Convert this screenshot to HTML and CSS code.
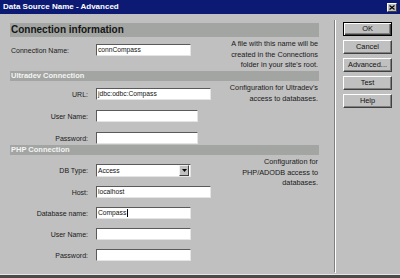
FILE: index.html
```html
<!DOCTYPE html>
<html>
<head>
<meta charset="utf-8">
<link rel="stylesheet" href="styles.css">
</head>
<body>
<div class="window">
  <div class="titlebar">
    <span class="title">Data Source Name - Advanced</span>
    <span class="close"><svg width="6" height="5" viewBox="0 0 6 5"><path d="M0.5 0.5 L5.5 4.5 M5.5 0.5 L0.5 4.5" stroke="#000" stroke-width="1.2"/></svg></span>
  </div>
  <div class="content">
    <div class="main">
      <div class="band band-lg">Connection information</div>
      <div class="section s1">
        <div class="fields">
          <div class="row"><span class="lbl left">Connection Name:</span><div class="input w-s">connCompass</div></div>
        </div>
        <div class="desc">A file with this name will be<br>created in the Connections<br>folder in your site's root.</div>
      </div>
      <div class="band">Ultradev Connection</div>
      <div class="section s2">
        <div class="fields">
          <div class="row"><span class="lbl">URL:</span><div class="input w-l">jdbc:odbc:Compass</div></div>
          <div class="row"><span class="lbl">User Name:</span><div class="input w-m"></div></div>
          <div class="row"><span class="lbl">Password:</span><div class="input w-m"></div></div>
        </div>
        <div class="desc">Configuration for Ultradev's<br>access to databases.</div>
      </div>
      <div class="band">PHP Connection</div>
      <div class="section s3">
        <div class="fields">
          <div class="row"><span class="lbl">DB Type:</span><div class="input select w-s"><span class="sel-text">Access</span><span class="dd"><svg width="5" height="3" viewBox="0 0 5 3"><polygon points="0,0 5,0 2.5,3" fill="#000"/></svg></span></div></div>
          <div class="row"><span class="lbl">Host:</span><div class="input w-l">localhost</div></div>
          <div class="row"><span class="lbl">Database name:</span><div class="input w-s">Compass<span class="caret"></span></div></div>
          <div class="row"><span class="lbl">User Name:</span><div class="input w-s"></div></div>
          <div class="row"><span class="lbl">Password:</span><div class="input w-s"></div></div>
        </div>
        <div class="desc">Configuration for<br>PHP/ADODB access to<br>databases.</div>
      </div>
    </div>
    <div class="sep"></div>
    <div class="buttons">
      <div class="btn default">OK</div>
      <div class="btn">Cancel</div>
      <div class="btn">Advanced...</div>
      <div class="btn">Test</div>
      <div class="btn">Help</div>
    </div>
  </div>
</div>
</body>
</html>
```

FILE: styles.css
```css
html, body {
  margin: 0;
  padding: 0;
}
body {
  width: 400px;
  height: 278px;
  overflow: hidden;
  background: #c0c0c0;
  font-family: "Liberation Sans", Arial, sans-serif;
  color: #1a1a1a;
}
.window {
  width: 400px;
  border-bottom: 3px solid #4a4a4a;
}
.titlebar {
  height: 14px;
  background: #0c1a74;
  display: flex;
  align-items: center;
  justify-content: space-between;
  padding: 0 3px;
}
.title {
  color: #fff;
  font-weight: bold;
  font-size: 8px;
  line-height: 14px;
  white-space: nowrap;
}
.close {
  width: 10px;
  height: 9px;
  box-sizing: border-box;
  background: #c0c0c0;
  border: 1px solid;
  border-color: #fff #404040 #404040 #fff;
  display: flex;
  align-items: center;
  justify-content: center;
}
.content {
  height: 260px;
  border-bottom: 1px solid #e6e6e6;
  display: flex;
  align-items: flex-start;
  padding-left: 10px;
}
.main {
  width: 309px;
  padding-top: 9px;
}
.band {
  background: #a3a5a3;
  height: 10px;
  line-height: 10px;
  font-size: 7.5px;
  font-weight: bold;
  color: #f4f4f4;
  padding-left: 1px;
  white-space: nowrap;
}
.band-lg {
  height: 14px;
  line-height: 14px;
  font-size: 10px;
  color: #151515;
}
.section {
  display: flex;
  align-items: flex-start;
}
.s1 { height: 34px; }
.s2 { height: 64px; }
.s3 { height: 119px; }
.fields {
  display: flex;
  flex-direction: column;
  width: 215px;
  flex: none;
}
.s1 .fields { padding-top: 7px; }
.s2 .fields { padding-top: 7px; gap: 10px; }
.s3 .fields { padding-top: 9px; gap: 9px; }
.row {
  display: grid;
  grid-template-columns: 78px auto;
  column-gap: 8px;
  align-items: center;
  justify-content: start;
}
.lbl {
  font-size: 7px;
  text-align: right;
  white-space: nowrap;
}
.lbl.left {
  text-align: left;
  padding-left: 1px;
}
.input {
  height: 12px;
  box-sizing: border-box;
  background: #fff;
  border: 1px solid;
  border-color: #5a5a5a #e4e4e4 #e4e4e4 #5a5a5a;
  font-size: 6.7px;
  line-height: 10px;
  padding-left: 1px;
  white-space: nowrap;
  color: #111;
}
.w-s { width: 95px; }
.w-m { width: 102px; }
.w-l { width: 115px; }
.select {
  height: 13px;
  display: flex;
  align-items: center;
  justify-content: space-between;
  padding-right: 1px;
}
.sel-text {
  line-height: 11px;
}
.dd {
  width: 10px;
  height: 11px;
  box-sizing: border-box;
  background: #c0c0c0;
  border: 1px solid;
  border-color: #f0f0f0 #404040 #404040 #f0f0f0;
  display: flex;
  align-items: center;
  justify-content: center;
}
.caret {
  display: inline-block;
  width: 1px;
  height: 8px;
  background: #000;
  vertical-align: middle;
  margin-left: 0.5px;
}
.desc {
  flex: 1;
  text-align: right;
  white-space: nowrap;
  font-size: 7.3px;
  line-height: 10.5px;
  padding-top: 2px;
  padding-right: 1px;
}
.sep {
  margin-left: 15px;
  margin-top: 6px;
  width: 0;
  height: 252px;
  border-left: 1px solid #808080;
  border-right: 1px solid #fff;
  border-bottom: 1px solid #fff;
}
.buttons {
  margin-left: 7px;
  width: 49px;
  padding-top: 8px;
  display: flex;
  flex-direction: column;
  gap: 4px;
}
.btn {
  height: 14px;
  box-sizing: border-box;
  border: 1px solid;
  border-color: #fff #404040 #404040 #fff;
  box-shadow: inset -1px -1px 0 #808080;
  font-size: 7.4px;
  line-height: 12px;
  text-align: center;
  color: #111;
  white-space: nowrap;
}
.btn.default {
  border-color: #000;
  box-shadow: inset 1px 1px 0 #fff, inset -1px -1px 0 #404040, inset -2px -2px 0 #808080;
}
```
